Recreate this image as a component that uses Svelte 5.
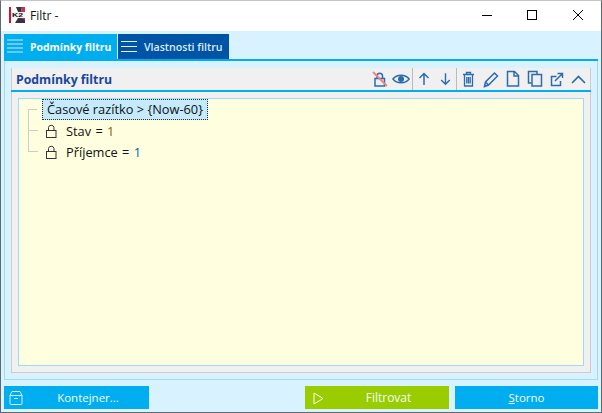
<script>
	const conditions = [
		{ label: 'Stav', value: '1', color: '#8a6400' },
		{ label: 'Příjemce', value: '1', color: '#005f9e' }
	];
</script>

<div class="window">
	<header class="titlebar">
		<svg class="logo" width="16" height="16" viewBox="0 0 16 16">
			<rect width="16" height="16" fill="#fff" />
			<rect width="2" height="16" fill="#d4122e" />
			<path d="M7 0h6l-1 5H9z" fill="#3b3340" />
			<path d="M13 0h3v5h-4z" fill="#c8324a" />
			<path d="M9 11h7v5H6z" fill="#3b3340" />
			<path d="M12 11h4v2z" fill="#c8324a" />
			<rect x="2" y="5" width="14" height="6" fill="#f4f4f4" />
			<text x="3" y="10" class="logo-text" textLength="11" lengthAdjust="spacingAndGlyphs">K2</text>
		</svg>
		<span class="title">Filtr -</span>
		<div class="controls">
			<svg width="46" height="28" viewBox="0 0 46 28"><path d="M19 14.500h10" stroke="#000" /></svg>
			<svg width="46" height="28" viewBox="0 0 46 28"><rect x="18.500" y="9.500" width="9" height="9" fill="none" stroke="#000" /></svg>
			<svg width="46" height="28" viewBox="0 0 46 28"><path d="M18 9l10 10M28 9L18 19" stroke="#000" /></svg>
		</div>
	</header>

	<div class="client">
		<nav class="tabs">
			<button class="tab active">
				<svg width="16" height="25" viewBox="0 0 16 25"><path d="M0 6h16M0 10h16M0 14h16M0 18h16" stroke="#66ccf5" stroke-width="2" /></svg>
				Podmínky filtru
			</button>
			<button class="tab second">
				<svg width="16" height="25" viewBox="0 0 16 25"><path d="M0 7.500h16M0 12.500h16M0 17.500h16" stroke="#e4eef9" /></svg>
				Vlastnosti filtru
			</button>
		</nav>

		<section class="outer">
			<div class="panel">
				<div class="panel-head">
					<h2>Podmínky filtru</h2>
					<div class="tools">
						<svg viewBox="0 0 22 22" fill="none" stroke="#2b6cb0" stroke-width="1.500">
							<rect x="6" y="10.500" width="9.500" height="7.500" />
							<path d="M8 10.500V7.500a2.800 2.800 0 0 1 5.500 0v3" />
							<path d="M4 4l14 14" stroke="#f08080" stroke-width="1.800" />
						</svg>
						<svg class="sep" viewBox="0 0 22 22" fill="none" stroke="#2b6cb0" stroke-width="1.500">
							<path d="M2 11c4-5.300 13-5.300 17 0-4 5.300-13 5.300-17 0z" />
							<circle cx="10.500" cy="11" r="2.400" fill="#2b6cb0" />
						</svg>
						<svg viewBox="0 0 22 22" fill="none" stroke="#2b6cb0" stroke-width="1.500">
							<path d="M11 17V5.500M6.500 10L11 5.500l4.500 4.500" />
						</svg>
						<svg class="sep" viewBox="0 0 22 22" fill="none" stroke="#2b6cb0" stroke-width="1.500">
							<path d="M11 5v11.500M6.500 12l4.500 4.500 4.500-4.500" />
						</svg>
						<svg viewBox="0 0 22 22" fill="none" stroke="#2b6cb0" stroke-width="1.300">
							<path d="M7.500 7v11h8V7M6 6.500h11M9.500 6.500V4.500h4v2M9.800 9v6.500M11.500 9v6.500M13.200 9v6.500" />
						</svg>
						<svg viewBox="0 0 22 22" fill="none" stroke="#2b6cb0" stroke-width="1.500">
							<path d="M5.500 18.500l1-4.500 9-9 3 3-9 9zM6.500 14l3.500 3.500" />
						</svg>
						<svg viewBox="0 0 22 22" fill="none" stroke="#2b6cb0" stroke-width="1.500">
							<path d="M6.500 3.500h7l4 4v10.500h-11zM13 3.500V8h4.500" />
						</svg>
						<svg viewBox="0 0 22 22" fill="none" stroke="#2b6cb0" stroke-width="1.500">
							<path d="M8.500 15H5.500V3.500H14V6" />
							<rect x="9" y="6.500" width="9.500" height="11.500" />
						</svg>
						<svg viewBox="0 0 22 22" fill="none" stroke="#2b6cb0" stroke-width="1.500">
							<path d="M15.500 13v4.500h-9V8.500h5M10 13l7-7M12.500 5.500h5V10" />
						</svg>
						<svg viewBox="0 0 22 22" fill="none" stroke="#2b6cb0" stroke-width="1.700">
							<path d="M5 15l6.500-6.500L18 15" />
						</svg>
					</div>
				</div>
				<div class="tree">
					<ul>
						<li class="first">
							<span class="selected">Časové razítko &gt; &#123;Now-60&#125;</span>
						</li>
						{#each conditions as c}
							<li>
								<svg class="lock" width="11" height="14" viewBox="0 0 11 14" fill="none" stroke="#333">
									<rect x="0.500" y="6.500" width="9.500" height="7" />
									<path d="M2.500 6.500V3.500a2.800 2.800 0 0 1 5.500 0v3" />
								</svg>
								<span class="cond">{c.label} = <span style:color={c.color}>{c.value}</span></span>
							</li>
						{/each}
					</ul>
				</div>
			</div>
		</section>

		<footer class="actions">
			<button class="btn blue container">
				<svg width="14" height="14" viewBox="0 0 14 14" fill="none" stroke="#d5f0ff">
					<path d="M1 4.500h12v8a1 1 0 0 1-1 1H2a1 1 0 0 1-1-1zM1 4.500L3 .5h8l2 4M5 7.500h4" />
				</svg>
				Kontejner...
			</button>
			<span class="spring"></span>
			<button class="btn green filter">
				<svg width="11" height="13" viewBox="0 0 11 13" fill="none" stroke="#fff"><path d="M1 1v11l9-5.500z" /></svg>
				Filtrovat
			</button>
			<button class="btn blue cancel"><span><u>S</u>torno</span></button>
		</footer>
	</div>
</div>

<style>
	:global(body) {
		background: #fff;
	}
	.window {
		width: 602px;
		height: 413px;
		box-sizing: border-box;
		border: 1px solid #5d6a72;
		border-top-color: #c4c4c4;
		display: flex;
		flex-direction: column;
		background: #fff;
		font-family: "Open Sans", "Noto Sans", sans-serif;
		font-size: 12px;
	}
	.titlebar {
		height: 28px;
		padding: 0 0 2px 8px;
		display: flex;
		align-items: center;
		flex: none;
	}
	.logo-text {
		font: 800 6px "Liberation Sans", sans-serif;
		fill: #111;
	}
	.title {
		margin-left: 5px;
		color: #111;
	}
	.controls {
		margin-left: auto;
		display: flex;
		align-self: flex-start;
	}
	.controls svg {
		display: block;
	}
	.client {
		flex: 1;
		min-height: 0;
		background: #d8f2ff;
		display: flex;
		flex-direction: column;
		padding: 3px;
	}
	.tabs {
		display: flex;
		gap: 1px;
		flex: none;
		border-bottom: 2px solid #00aeef;
	}
	.tab {
		border: 0;
		background: #0054a6;
		color: #dfeaf7;
		font: 600 10.600px "Open Sans", sans-serif;
		display: flex;
		align-items: center;
		gap: 7px;
		padding: 0 0 0 3px;
		height: 25px;
		width: 111px;
		white-space: nowrap;
	}
	.tab.active {
		background: #00aeef;
		color: #fff;
		font-weight: 700;
		font-size: 10.400px;
		width: 113px;
	}
	.outer {
		flex: 1;
		min-height: 0;
		border: 1px solid #9bdcf6;
		border-top: 0;
		padding: 7px 6px 6px;
		margin-bottom: 6px;
	}
	.panel {
		height: 100%;
		box-sizing: border-box;
		background: #f0f0f0;
		border: 1px solid #ccc;
		border-top: 0;
		display: flex;
		flex-direction: column;
	}
	.panel-head {
		height: 22px;
		flex: none;
		display: flex;
		align-items: center;
		justify-content: space-between;
		border-bottom: 2px solid #00aeef;
		margin: 0 -1px;
		padding: 0 2px 0 5px;
	}
	h2 {
		margin: 0;
		font: 700 12.300px "Open Sans", sans-serif;
		color: #17479e;
	}
	.tools {
		display: flex;
	}
	.tools svg {
		display: block;
		width: 22px;
		height: 22px;
		box-sizing: border-box;
	}
	.tools .sep {
		border-right: 1px solid #bbb;
	}
	.tree {
		flex: 1;
		min-height: 0;
		margin: 6px;
		border: 1px solid #9bdcf6;
		background: #ffffe0;
		padding-left: 9px;
	}
	ul {
		list-style: none;
		margin: 0;
		padding: 0;
		font-size: 12.800px;
		color: #111;
	}
	li {
		height: 21px;
		display: flex;
		align-items: center;
		gap: 9px;
		position: relative;
		padding-left: 18px;
	}
	li.first {
		padding-left: 14px;
	}
	li::before {
		content: "";
		position: absolute;
		left: 0;
		top: -11px;
		height: 21px;
		width: 9px;
		border-left: 1px solid #ccc;
		border-bottom: 1px solid #ccc;
	}
	li.first::before {
		top: 10px;
		height: 0;
		border-left: 0;
	}
	.selected {
		background: #c5eafb;
		border: 1px dotted #333;
		box-sizing: border-box;
		height: 21px;
		line-height: 19px;
		padding: 0 4px;
	}
	.cond {
		word-spacing: 1px;
	}
	.actions {
		display: flex;
		gap: 6px;
		height: 23px;
		flex: none;
	}
	.spring {
		flex: 1;
	}
	.btn {
		border: 0;
		color: #f2fbff;
		font: 400 12px "Open Sans", sans-serif;
		display: flex;
		align-items: center;
		justify-content: center;
		position: relative;
		padding: 0;
	}
	.btn svg {
		position: absolute;
		left: 5px;
		top: 5px;
	}
	.blue {
		background: #00aeef;
	}
	.green {
		background: #9acd00;
	}
	.container {
		width: 145px;
		padding-left: 23px;
		font-size: 11.500px;
	}
	.filter {
		width: 144px;
		padding-left: 23px;
	}
	.filter svg {
		left: 8px;
		top: 6px;
	}
	.cancel {
		width: 143px;
		font-size: 11.500px;
	}
</style>
